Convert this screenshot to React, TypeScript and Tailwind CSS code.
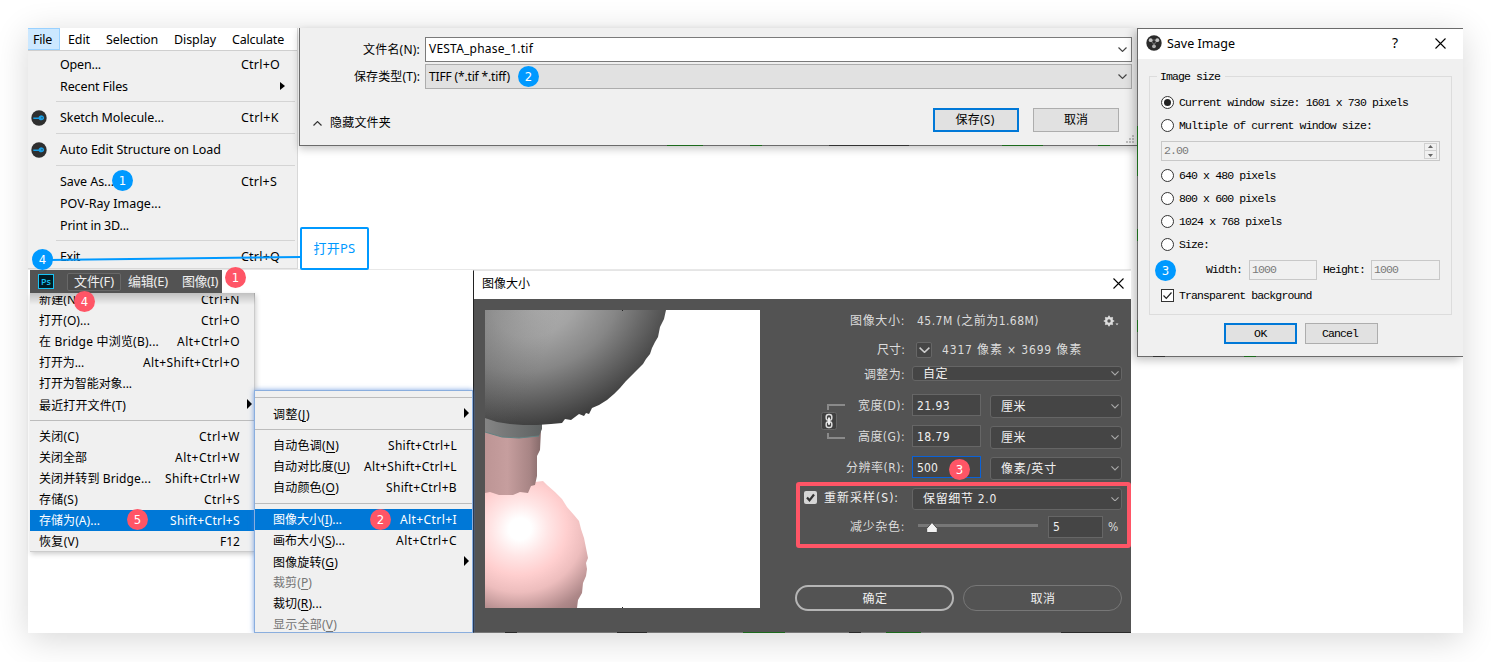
import React, { useLayoutEffect, useRef, useState } from "react";

const UI = "font-['Noto_Sans','Noto_Sans_CJK_SC',sans-serif]";
const MONO = "font-['Liberation_Mono','Noto_Sans_CJK_SC',monospace] text-[11.5px]";
const PS = "font-['DejaVu_Sans_Condensed','DejaVu_Sans','Noto_Sans_CJK_SC',sans-serif]";

/* A single line of text tracked out (or in) to an exact width. */
function T({ w, children, className = "" }: { w: number; children: React.ReactNode; className?: string }) {
  const ref = useRef<HTMLSpanElement>(null);
  const [ls, setLs] = useState(0);
  useLayoutEffect(() => {
    const el = ref.current;
    if (!el) return;
    const n = (el.textContent || "").length;
    setLs((w - el.getBoundingClientRect().width) / Math.max(1, n));
  }, [w]);
  return (
    <span className={`block shrink-0 whitespace-pre ${className}`} style={{ width: w }}>
      <span ref={ref} style={{ letterSpacing: ls }}>{children}</span>
    </span>
  );
}

function Badge({ n, className }: { n: number; className: string }) {
  return (
    <div className={`absolute z-30 flex h-[21px] w-[21px] items-center justify-center rounded-full font-['DejaVu_Sans_Condensed','DejaVu_Sans',sans-serif] text-[13px] leading-none text-white ${className}`}>
      {n}
    </div>
  );
}

function Chevron({ className = "", size = 9 }: { className?: string; size?: number }) {
  return (
    <svg width={size} height={(size * 5) / 9} viewBox="0 0 9 5" fill="none" stroke="currentColor" strokeWidth="1.2" className={`shrink-0 ${className}`}>
      <path d="M.5.5 4.5 4.400 8.500.5" />
    </svg>
  );
}

function Cross({ size = 11, className = "" }: { size?: number; className?: string }) {
  return (
    <svg width={size} height={size} viewBox="0 0 11 11" stroke="#000" strokeWidth="1.1" className={className}>
      <path d="M.5.5l10 10M10.500.5l-10 10" />
    </svg>
  );
}

function Arrow({ className = "", h = 10 }: { className?: string; h?: number }) {
  return (
    <svg width="5" height={h} viewBox="0 0 5 10" preserveAspectRatio="none" className={className}>
      <path d="M0 0 5 5 0 10z" fill="#000" />
    </svg>
  );
}

function Sketch() {
  return (
    <svg width="16" height="16" viewBox="0 0 16 16">
      <circle cx="8" cy="8" r="7.7" fill="#2f2f2f" />
      <path d="M2.300 7.600h5.300C7.900 6.200 9.200 5.200 10.700 5.400c1.800.2 2.500 1.300 2.400 2.600-.1 1.400-1.300 2.300-2.800 2.200-1.200 0-2.200-.5-2.600-1.300H2.300z" fill="#1a9ee4" />
      <circle cx="11" cy="7.800" r=".8" fill="#24536b" />
    </svg>
  );
}

type FileItem = { t: string; w: number; k?: string; kw?: number; icon?: boolean; sub?: boolean };
const fileItems: (FileItem | number)[] = [
  { t: "Open...", w: 41, k: "Ctrl+O", kw: 39 },
  { t: "Recent Files", w: 68, sub: true },
  9,
  { t: "Sketch Molecule...", w: 104, k: "Ctrl+K", kw: 38, icon: true },
  10,
  { t: "Auto Edit Structure on Load", w: 161, icon: true },
  10,
  { t: "Save As...", w: 54, k: "Ctrl+S", kw: 36 },
  { t: "POV-Ray Image...", w: 101 },
  { t: "Print in 3D...", w: 69 },
  9,
  { t: "Exit", w: 20, k: "Ctrl+Q", kw: 39 },
];

function VestaMenu() {
  return (
    <div className={`absolute left-[28px] top-[28px] h-[241px] w-[270px] border-b border-r border-[#d8d8d8] bg-[#f0f0f0] text-[12.5px] text-black ${UI}`}>
      <div className="flex h-[23px] items-center border-b border-[#cfcfcf] bg-white">
        <div className="flex h-[22px] w-[32px] items-center border border-l-0 border-[#99d1ff] bg-[#cce8ff] pl-[5px] pt-[2px]">
          <T w={19}>File</T>
        </div>
        <div className="flex gap-[16px] pl-[8px] pt-[2px]">
          <T w={22}>Edit</T>
          <T w={52}>Selection</T>
          <T w={42}>Display</T>
          <T w={52}>Calculate</T>
        </div>
      </div>
      <div className="pt-[3px]">
        {fileItems.map((it, i) =>
          typeof it === "number" ? (
            <div key={i} className={it === 9 ? "h-[9px] pl-[28px] pr-[2px] pt-[3px]" : "h-[10px] pl-[28px] pr-[2px] pt-[4px]"}>
              <div className="h-px bg-[#d4d4d4]" />
            </div>
          ) : (
            <div key={i} className="flex h-[22px] items-center">
              <div className="w-[32px] shrink-0 pl-[3px]">{it.icon && <Sketch />}</div>
              <div className="w-[181px] shrink-0">
                <T w={it.w}>{it.t}</T>
              </div>
              {it.k && <T w={it.kw!}>{it.k}</T>}
              {it.sub && <Arrow className="-mt-[2px] ml-[39px]" h={8} />}
            </div>
          ),
        )}
      </div>
    </div>
  );
}

function SaveDialog() {
  return (
    <div className={`absolute left-[299px] top-[28px] h-[118px] w-[838px] border-b border-l border-[#6b6b6b] bg-[#f0f0f0] text-[12px] text-black shadow-[0_3px_8px_rgba(0,0,0,0.22)] ${UI}`}>
      <div className="flex items-center pt-[9px]">
        <div className="flex w-[125px] justify-end pr-[5px]"><T w={57}>文件名(N):</T></div>
        <div className="flex h-[25px] w-[707px] items-center justify-between border border-[#7a7a7a] bg-white pb-px pl-[3px] pr-[4px]">
          <T w={104}>VESTA_phase_1.tif</T>
          <Chevron className="text-[#444]" />
        </div>
      </div>
      <div className="flex items-center pt-[2px]">
        <div className="flex w-[125px] justify-end pr-[5px]"><T w={66}>保存类型(T):</T></div>
        <div className="flex h-[25px] w-[707px] items-center justify-between border border-[#adadad] bg-[#e1e1e1] pl-[3px] pr-[4px]">
          <T w={81}>TIFF (*.tif *.tiff)</T>
          <Chevron className="text-[#444]" />
        </div>
      </div>
      <div className="flex items-start pt-[19px]">
        <div className="flex w-[633px] items-center pl-[13px] pt-[6px]">
          <Chevron className="rotate-180 text-[#333]" />
          <T w={61} className="ml-[8px]">隐藏文件夹</T>
        </div>
        <div className="flex h-[24px] w-[86px] items-center justify-center border-2 border-[#0078d7] bg-[#e1e1e1] pr-[2px]"><T w={39}>保存(S)</T></div>
        <div className="ml-[14px] flex h-[24px] w-[86px] items-center justify-center border border-[#adadad] bg-[#e1e1e1]"><T w={24}>取消</T></div>
        <svg width="8" height="8" viewBox="0 0 8 8" fill="#bdbdbd" className="ml-[7px] mt-[27px]">
          <path d="M6 0h2v2H6zM3 3h2v2H3zM6 3h2v2H6zM0 6h2v2H0zM3 6h2v2H3zM6 6h2v2H6z" />
        </svg>
      </div>
    </div>
  );
}

function Radio({ on, t }: { on?: boolean; t: string }) {
  return (
    <div className="flex h-[23px] items-center gap-[5px]">
      <div className="flex h-[13px] w-[13px] items-center justify-center rounded-full border border-[#333] bg-white">
        {on && <div className="h-[7px] w-[7px] rounded-full bg-[#222]" />}
      </div>
      <T w={t.length * 6.03} className="pt-px">{t}</T>
    </div>
  );
}

function ImageDialog() {
  return (
    <div className={`absolute left-[1137px] top-[28px] h-[329px] w-[326px] border border-r-0 border-[#6b6b6b] bg-[#f0f0f0] text-black shadow-[-3px_3px_9px_rgba(0,0,0,0.25)] [clip-path:inset(0_0_-20px_-20px)] ${MONO}`}>
      <div className={`flex h-[30px] items-center bg-white text-[12.5px] ${UI}`}>
        <svg width="16" height="16" viewBox="0 0 16 16" className="-mt-[2px] ml-[8px]">
          <circle cx="8" cy="8" r="7.700" fill="#2b2b2b" />
          <path d="M4.500 5 8 9.500 11.500 5M8 9.500V13M4.500 5h7" stroke="#666" strokeWidth="1.200" fill="none" />
          <circle cx="4.700" cy="5.200" r="1.900" fill="#c4c4c4" />
          <circle cx="11.300" cy="5.200" r="1.900" fill="#c4c4c4" />
          <circle cx="8" cy="11.300" r="1.900" fill="#b0b0b0" />
        </svg>
        <T w={68} className="ml-[5px]">Save Image</T>
        <div className="-mt-[2px] ml-[157px] w-[7px] text-[14px] leading-none">?</div>
        <Cross className="-mt-[2px] ml-[36px]" />
      </div>
      <div className="ml-[11px] mt-[17px] h-[239px] w-[303px] border border-[#dcdcdc]">
        <div className="-mt-[9px] ml-[7px] flex h-[16px] w-[68px] items-center bg-[#f0f0f0] pl-[3px] pt-[2px]"><T w={60}>Image size</T></div>
        <div className="pl-[11px] pt-[7px]">
          <Radio on t="Current window size: 1601 x 730 pixels" />
          <Radio t="Multiple of current window size:" />
          <div className="mb-[3px] mt-[4px] flex h-[20px] w-[279px] items-center justify-between border border-[#c8c8c8] pl-[2px] pr-[2px] text-[#7a7a7a]">
            <T w={24}>2.00</T>
            <div className="flex h-[16px] w-[13px] flex-col items-center justify-around border border-[#d0d0d0]">
              <svg width="5" height="3" viewBox="0 0 5 3"><path d="M0 3 2.500 0 5 3z" fill="#666" /></svg>
              <div className="h-px w-full bg-[#d0d0d0]" />
              <svg width="5" height="3" viewBox="0 0 5 3"><path d="M0 0 2.500 3 5 0z" fill="#666" /></svg>
            </div>
          </div>
          <Radio t="640 x 480 pixels" />
          <Radio t="800 x 600 pixels" />
          <Radio t="1024 x 768 pixels" />
          <Radio t="Size:" />
          <div className="mt-[4px] flex items-center pl-[45px]">
            <T w={36}>Width:</T>
            <div className="ml-[7px] flex h-[20px] w-[68px] items-center border border-[#c8c8c8] pl-[2px] text-[#7a7a7a]"><T w={24}>1000</T></div>
            <T w={42} className="ml-[6px]">Height:</T>
            <div className="ml-[6px] flex h-[20px] w-[69px] items-center border border-[#c8c8c8] pl-[2px] text-[#7a7a7a]"><T w={24}>1000</T></div>
          </div>
          <div className="mt-[6px] flex items-center gap-[5px]">
            <svg width="13" height="13" viewBox="0 0 13 13"><rect x=".5" y=".5" width="12" height="12" fill="#fff" stroke="#333" /><path d="M2.500 6.500 5.300 9.300 10.500 3.500" fill="none" stroke="#222" strokeWidth="1.200" /></svg>
            <T w={132.5} className="pt-px">Transparent background</T>
          </div>
        </div>
      </div>
      <div className="flex gap-[8px] pl-[86px] pt-[8px]">
        <div className="flex h-[21px] w-[73px] items-center justify-center border-2 border-[#0078d7] bg-[#e1e1e1] pt-px"><T w={13}>OK</T></div>
        <div className="flex h-[21px] w-[73px] items-center justify-center border border-[#adadad] bg-[#e1e1e1] pr-[3px] pt-px"><T w={36}>Cancel</T></div>
      </div>
    </div>
  );
}

type PsItem = { t: string; w: number; k?: string; kw?: number; sel?: boolean; sub?: boolean; tall?: boolean };
const psFile: (PsItem | null)[] = [
  { t: "打开(O)...", w: 51, k: "Ctrl+O", kw: 39 },
  { t: "在 Bridge 中浏览(B)...", w: 120, k: "Alt+Ctrl+O", kw: 63 },
  { t: "打开为...", w: 45, k: "Alt+Shift+Ctrl+O", kw: 97 },
  { t: "打开为智能对象...", w: 93 },
  { t: "最近打开文件(T)", w: 87, sub: true, tall: true },
  null,
  { t: "关闭(C)", w: 40, k: "Ctrl+W", kw: 41 },
  { t: "关闭全部", w: 48, k: "Alt+Ctrl+W", kw: 65 },
  { t: "关闭并转到 Bridge...", w: 112, k: "Shift+Ctrl+W", kw: 75 },
  { t: "存储(S)", w: 39, k: "Ctrl+S", kw: 36 },
  { t: "存储为(A)...", w: 61, k: "Shift+Ctrl+S", kw: 70, sel: true },
  { t: "恢复(V)", w: 40, k: "F12", kw: 20 },
];

function PsFileMenu() {
  return (
    <div className={`absolute left-[30px] top-[293px] h-[259px] w-[225px] border-b border-r border-[#ccc] bg-[#f0f0f0] text-[12px] text-black shadow-[1px_2px_5px_rgba(0,0,0,0.2)] ${UI}`}>
      <div className="flex h-[17px] items-end overflow-hidden">
        <div className="flex h-[14px] w-full items-end justify-between overflow-hidden pl-[9px] pr-[14px] leading-[20px]">
          <T w={51}>新建(N)...</T>
          <T w={39}>Ctrl+N</T>
        </div>
      </div>
      {psFile.map((it, i) =>
        it === null ? (
          <div key={i} className="h-[10px] pt-[4px]"><div className="h-px bg-[#bcbcbc]" /></div>
        ) : (
          <div key={i} className={`flex items-center justify-between pl-[9px] ${it.tall ? "h-[22px] pt-px" : "h-[21px]"} ${it.sub ? "pr-[2px]" : "pr-[14px]"} ${it.sel ? "bg-[#0078d7] text-white" : ""}`}>
            <T w={it.w}>{it.t}</T>
            {it.k && <T w={it.kw!}>{it.k}</T>}
            {it.sub && <Arrow className="-mt-[4px]" />}
          </div>
        ),
      )}
      <div className="pointer-events-none absolute left-0 top-0 h-[12px] w-[225px] bg-linear-to-b from-black/20 to-transparent" />
    </div>
  );
}

function PsBar() {
  return (
    <div className={`absolute left-[30px] top-[270px] flex h-[23px] w-[192px] items-center bg-[#535353] text-[13px] text-[#eee] ${UI}`}>
      <div className="ml-[8px] flex h-[15px] w-[16px] items-center justify-center border border-[#19c3f5] bg-[#001d26] font-['Open_Sans',sans-serif] text-[9px] font-semibold leading-none text-[#19c3f5]">Ps</div>
      <div className="ml-[13px] flex h-[18px] w-[54px] items-center justify-center rounded-[2px] border border-[#686868] bg-[#4c4c4c]"><T w={40}>文件(F)</T></div>
      <T w={40} className="ml-[7px]">编辑(E)</T>
      <T w={36} className="ml-[14px]">图像(I)</T>
    </div>
  );
}

type SubItem = { a: string; m: string; z?: string; w: number; k?: string; kw?: number; sel?: boolean; sub?: boolean; off?: boolean; h?: string };
const subItems: (SubItem | string)[] = [
  "h-[12px] pt-[6px]",
  { a: "调整", m: "J", w: 37, sub: true, h: "h-[22px] pt-[2px]" },
  "h-[10px] pt-[4px]",
  { a: "自动色调", m: "N", w: 66, k: "Shift+Ctrl+L", kw: 69 },
  { a: "自动对比度", m: "U", w: 77, k: "Alt+Shift+Ctrl+L", kw: 93 },
  { a: "自动颜色", m: "O", w: 66, k: "Shift+Ctrl+B", kw: 71 },
  "h-[11px] pt-[5px]",
  { a: "图像大小", m: "I", z: "...", w: 69, k: "Alt+Ctrl+I", kw: 57, sel: true },
  { a: "画布大小", m: "S", z: "...", w: 72, k: "Alt+Ctrl+C", kw: 61 },
  { a: "图像旋转", m: "G", w: 65, sub: true, h: "h-[22px] pt-[2px]" },
  { a: "裁剪", m: "P", w: 39, off: true, h: "h-[21px] pb-[2px]" },
  { a: "裁切", m: "R", z: "...", w: 49, h: "h-[21px] pb-[2px]" },
  { a: "显示全部", m: "V", w: 64, off: true, h: "h-[19px]" },
];

function PsImageMenu() {
  return (
    <div className={`absolute left-[254px] top-[390px] z-10 h-[243px] w-[219px] border border-[#8aaede] bg-[#f0f0f0] text-[12px] text-black shadow-[0_0_5px_rgba(60,120,215,0.7)] [clip-path:inset(-10px_-2px_0_-10px)] ${UI}`}>
      {subItems.map((it, i) =>
        typeof it === "string" ? (
          <div key={i} className={it}><div className="h-px bg-[#bcbcbc]" /></div>
        ) : (
          <div key={i} className={`flex items-center justify-between pl-[18px] leading-[20px] ${it.h ?? "h-[21px]"} ${it.sub ? "pr-[3px]" : "pr-[15px]"} ${it.sel ? "bg-[#0078d7] text-white" : it.off ? "text-[#757575]" : ""}`}>
            <T w={it.w}>{it.a}(<span className="underline underline-offset-2">{it.m}</span>){it.z}</T>
            {it.k && <T w={it.kw!}>{it.k}</T>}
            {it.sub && <Arrow className="-mt-[5px]" />}
          </div>
        ),
      )}
    </div>
  );
}

const GREY_BALL =
  "M0 0H181L179 9 175 17 173 27 170 32 167 38 165 44 161 49 158 54 150 62 141 71 135 78 129 84 122 90 114 95 107 98 104 104 101 103 99 106 94 104 90 107 86 110 80 109 77 113 66 114 52 115 38 115 25 114 12 112 0 108Z";

function Molecule() {
  return (
    <svg width="275" height="298" viewBox="0 0 275 298" className="ml-[11px] mt-[11px] shrink-0 bg-white">
      <defs>
        <radialGradient id="grey" gradientUnits="userSpaceOnUse" cx="50" cy="-8" r="150" gradientTransform="translate(50 -8) rotate(-20) scale(1.15 .9) translate(-50 8)">
          <stop offset="0" stopColor="#b0b0b0" />
          <stop offset=".25" stopColor="#a4a4a4" />
          <stop offset=".5" stopColor="#868686" />
          <stop offset=".75" stopColor="#595959" />
          <stop offset=".9" stopColor="#3e3e3e" />
          <stop offset="1" stopColor="#333" />
        </radialGradient>
        <linearGradient id="side" x1="0" y1="0" x2=".4" y2=".1">
          <stop offset="0" stopColor="#666" stopOpacity=".35" />
          <stop offset="1" stopColor="#666" stopOpacity="0" />
        </linearGradient>
        <radialGradient id="pink" gradientUnits="userSpaceOnUse" cx="35" cy="219" r="112" gradientTransform="translate(35 219) rotate(-25) scale(1 .97) translate(-35 -219)">
          <stop offset="0" stopColor="#fff" />
          <stop offset=".1" stopColor="#fff" />
          <stop offset=".25" stopColor="#ffe6e6" />
          <stop offset=".42" stopColor="#ffcfcf" />
          <stop offset=".58" stopColor="#edbdbd" />
          <stop offset=".8" stopColor="#ae8889" />
          <stop offset="1" stopColor="#8f6f70" />
        </radialGradient>
        <linearGradient id="tube">
          <stop offset="0" stopColor="#bd9595" />
          <stop offset=".4" stopColor="#c69e9e" />
          <stop offset=".8" stopColor="#a88585" />
          <stop offset="1" stopColor="#856a6a" />
        </linearGradient>
        <linearGradient id="joint">
          <stop offset="0" stopColor="#858585" />
          <stop offset="1" stopColor="#5e6262" />
        </linearGradient>
      </defs>
      <path d="M50 172L58 171 62 175 70 182 77 189 82 197 89 205 94 211 96 219 99 228 101 238 103 248 101 253 102 259 101 266 98 273 97 283 93 290 92 298H0V178Z" fill="url(#pink)" />
      <path d="M0 120h56l-1 20-3 6v20l-2 9-4 1-3 7-8-1-7 3-14 0-9-3-5 1z" fill="url(#tube)" />
      <path d="M0 104h57v15l-3 7-20 2-17-1L0 122z" fill="url(#joint)" />
      <path d="M0 122l17 5 17 1 20-2" fill="none" stroke="#628282" strokeWidth="1" />
      <path d={GREY_BALL} fill="url(#grey)" />
      <path d={GREY_BALL} fill="url(#side)" />
      <path d="M137 0h1v1h-1zM137 297h1v1h-1z" fill="#222" />
    </svg>
  );
}

function Label({ w, children }: { w: number; children: string }) {
  return <div className="flex w-[109px] shrink-0 justify-end"><T w={w}>{children}</T></div>;
}

function Select({ w, className, children }: { w: number; className: string; children: string }) {
  return (
    <div className={`flex items-center justify-between rounded-[3px] border border-[#656565] bg-[#454545] pr-[2px] text-[#f0f0f0] ${className}`}>
      <T w={w}>{children}</T>
      <Chevron className="text-[#aaa]" size={8} />
    </div>
  );
}

function SizeRow({ label, lw, value, unit, uw, focus, first }: { label: string; lw: number; value: string; unit: string; uw: number; focus?: boolean; first?: boolean }) {
  return (
    <div className={`flex h-[24px] ${first ? "mt-[8px]" : "mt-[7px]"}`}>
      <div className="flex h-[24px] items-center"><Label w={lw}>{label}</Label></div>
      <div className={`ml-[7px] flex h-[22px] w-[69px] items-center border bg-[#454545] pl-[4px] pt-[2px] text-[#f0f0f0] ${focus ? "border-[#0a62d8]" : "border-[#666]"}`}>
        <T w={value.length === 3 ? 21 : 33}>{value}</T>
      </div>
      <Select w={uw} className="ml-[9px] mt-px h-[23px] w-[132px] pl-[10px]">{unit}</Select>
    </div>
  );
}

function ImageSize() {
  return (
    <div className={`absolute left-[473px] top-[270px] flex h-[363px] w-[658px] flex-col border-b border-l border-t border-b-[#777] border-l-[#222] border-t-[#e5e5e5] bg-[#535353] text-[12px] text-[#dcdcdc] ${PS}`}>
      <div className={`flex h-[28px] items-center justify-between bg-white pb-[3px] pl-[8px] pr-[7px] text-black ${UI}`}>
        <T w={48}>图像大小</T>
        <Cross />
      </div>
      <div className="flex">
        <Molecule />
        <div className="ml-[36px] w-[335px] shrink-0 pt-[11px]">
          <div className="flex h-[22px] items-center">
            <Label w={55}>图像大小:</Label>
            <T w={122} className="ml-[12px]">45.7M (之前为1.68M)</T>
            <svg width="16" height="12" viewBox="0 0 16 12" className="ml-[64px]">
              <circle cx="6" cy="6" r="2.900" fill="none" stroke="#ddd" strokeWidth="2.200" />
              <path d="M6 .8v10.400M.8 6h10.400M2.300 2.300l7.400 7.400M9.700 2.300 2.300 9.700" stroke="#ddd" strokeWidth="1.700" />
              <circle cx="6" cy="6" r="1.700" fill="#535353" />
              <path d="M12.500 8.500h3l-1.500 1.700z" fill="#ddd" />
            </svg>
          </div>
          <div className="mt-[7px] flex h-[22px] items-center">
            <Label w={28}>尺寸:</Label>
            <div className="ml-[11px] flex h-[16px] w-[16px] items-center justify-center rounded-[2px] border border-[#666] bg-[#454545]"><Chevron className="text-[#ccc]" size={11} /></div>
            <T w={140} className="ml-[10px]">4317 像素 × 3699 像素</T>
          </div>
          <div className="mt-[3px] flex h-[22px] items-center">
            <Label w={41}>调整为:</Label>
            <Select w={25} className="-mt-[3px] ml-[7px] h-[15px] w-[210px] pl-[10px]">自定</Select>
          </div>
          <div className="relative">
            <SizeRow first label="宽度(D):" lw={47} value="21.93" unit="厘米" uw={25} />
            <SizeRow label="高度(G):" lw={47} value="18.79" unit="厘米" uw={25} />
            <svg width="26" height="38" viewBox="0 0 26 38" className="absolute left-[25px] top-[9px]" fill="none">
              <path d="M7 7V2h17M7 30v5h17" stroke="#8a8a8a" strokeWidth="2" />
              <rect x=".5" y="9.500" width="15" height="17" rx="2" fill="#404040" stroke="#666" />
              <rect x="5.200" y="11.500" width="5.600" height="5.800" rx="2.300" stroke="#ddd" strokeWidth="1.500" />
              <rect x="5.200" y="18.800" width="5.600" height="5.800" rx="2.300" stroke="#ddd" strokeWidth="1.500" />
              <path d="M8 14.500v7.200" stroke="#eee" strokeWidth="2" />
            </svg>
          </div>
          <SizeRow focus label="分辨率(R):" lw={59} value="500" unit="像素/英寸" uw={56} />
          <div className="mt-[2px] h-[66px] w-[335px] rounded-[3px] border-4 border-[#ff5566] pt-[2px] text-[#dcdcdc]">
            <div className="flex h-[22px] items-center">
              <svg width="13" height="13" viewBox="0 0 13 13" className="-mt-[3px] ml-[4px]"><rect width="13" height="13" rx="2" fill="#d6d6d6" /><path d="M3 6.500 5.500 9.300 10 3.500" fill="none" stroke="#333" strokeWidth="2.200" /></svg>
              <T w={75} className="-mt-[2px] ml-[7px] text-[#eee]">重新采样(S):</T>
              <Select w={74} className="ml-[13px] h-[22px] w-[210px] pl-[10px]">保留细节 2.0</Select>
            </div>
            <div className="mt-[6px] flex h-[22px] items-center">
              <div className="flex w-[105px] shrink-0 justify-end"><T w={55}>减少杂色:</T></div>
              <svg width="120" height="14" viewBox="0 0 120 14" className="ml-[13px] shrink-0">
                <path d="M0 5.500h120" stroke="#777" strokeWidth="3" />
                <path d="M14 2.500 8.700 8.500v3q0 1 1 1h8.600q1 0 1-1v-3z" fill="#f2f2f2" stroke="#333" strokeWidth=".8" />
              </svg>
              <div className="ml-[10px] flex h-[22px] w-[55px] items-center border border-[#666] bg-[#454545] pl-[4px] text-[#f0f0f0]"><T w={7}>5</T></div>
              <T w={12} className="ml-[5px]">%</T>
            </div>
          </div>
          <div className="-ml-px mt-[37px] flex gap-[9px] text-[#f0f0f0]">
            <div className="flex h-[26px] w-[159px] items-center justify-center rounded-full border-2 border-[#b5b5b5] pl-px pt-px"><T w={25}>确定</T></div>
            <div className="flex h-[26px] w-[159px] items-center justify-center rounded-full border border-[#777] pl-px pt-px"><T w={25}>取消</T></div>
          </div>
        </div>
      </div>
    </div>
  );
}

export default function App() {
  return (
    <div className="relative h-[662px] w-[1491px] overflow-hidden bg-white">
      <div className="absolute left-[28px] top-[28px] h-[605px] w-[1435px] bg-white shadow-[0_6px_32px_rgba(0,0,0,0.16)]" />
      <div className="absolute left-[28px] top-[269px] h-px w-[1103px] bg-[#e8e8e8]" />
      <VestaMenu />
      <SaveDialog />
      <ImageDialog />
      <PsFileMenu />
      <PsBar />
      <PsImageMenu />
      <ImageSize />

      <svg width="1164" height="606" viewBox="0 0 1164 606" className="pointer-events-none absolute left-[299px] top-[28px]">
        <path d="M368 117.500h36M451 117.500h12M703 117.500h41M799 117.500h12M838.500 98v50M838.500 201v12M838.500 292v12M945 328.500h12" stroke="#1c6a1c" />
        <path d="M530 117.500h80M854 328.500h12" stroke="#333" />
        <path d="M206 604.500h12M318 604.500h30M550 604.500h12M762 604.500h70" stroke="#2b2b2b" />
        <path d="M444 604.500h42M587 604.500h35" stroke="#1c6a1c" />
      </svg>
      <svg width="260" height="12" viewBox="0 0 260 12" className="pointer-events-none absolute left-[42px] top-[252px] z-20">
        <path d="M6 8 259 5" stroke="#0099ff" strokeWidth="2" />
      </svg>
      <div className={`absolute left-[300px] top-[227px] z-20 flex h-[43px] w-[69px] items-center justify-center rounded-[2px] border-2 border-[#0099ff] bg-white text-[13px] text-[#0099ff] ${UI}`}>
        <T w={42}>打开PS</T>
      </div>

      <Badge n={1} className="left-[112px] top-[170px] bg-[#0099ff]" />
      <Badge n={2} className="left-[518px] top-[66px] bg-[#0099ff]" />
      <Badge n={3} className="left-[1155px] top-[260px] bg-[#0099ff]" />
      <Badge n={4} className="left-[32px] top-[249px] bg-[#0099ff]" />
      <Badge n={1} className="left-[225px] top-[267px] bg-[#ff5566]" />
      <Badge n={2} className="left-[370px] top-[509px] bg-[#ff5566]" />
      <Badge n={3} className="left-[949px] top-[459px] bg-[#ff5566]" />
      <Badge n={4} className="left-[74px] top-[291px] bg-[#ff5566]" />
      <Badge n={5} className="left-[127px] top-[509px] bg-[#ff5566]" />
    </div>
  );
}
